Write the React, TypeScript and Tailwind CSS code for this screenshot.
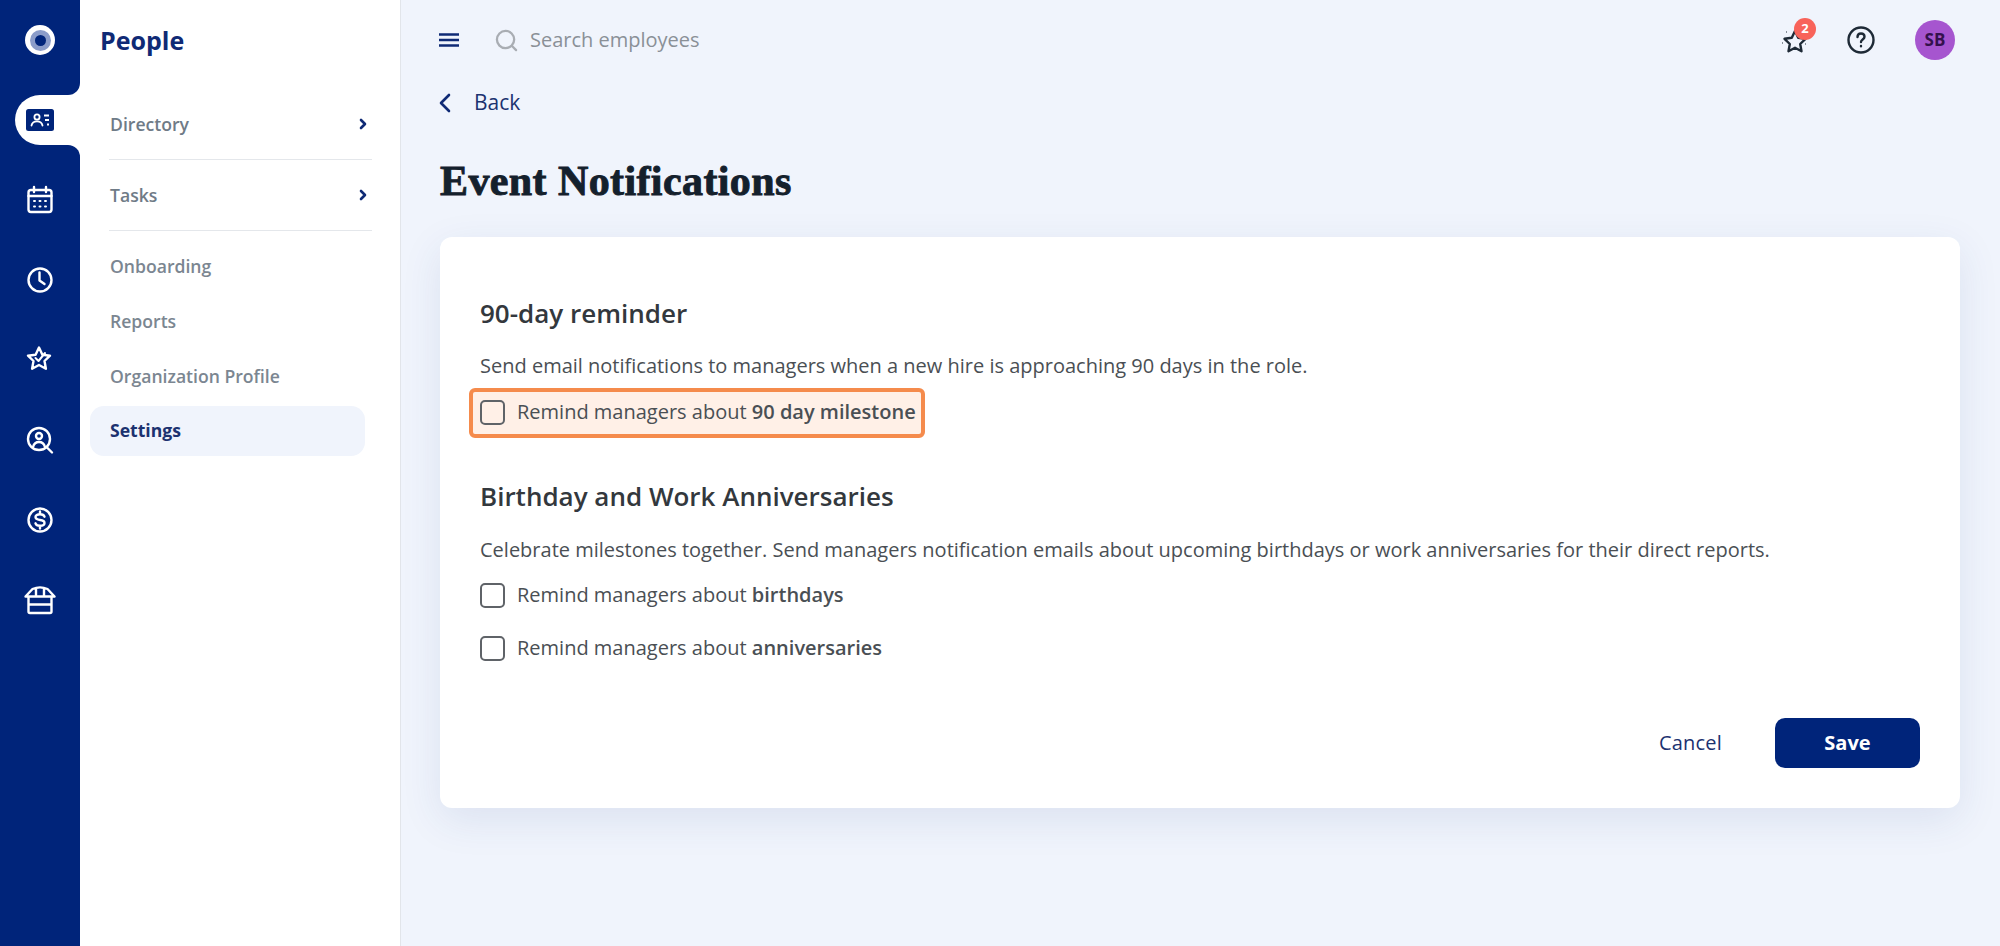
import type {ReactNode} from 'react';

const font = {fontFamily: '"Open Sans", sans-serif'};

function RailIcon({children}: {children: ReactNode}) {
	return (
			<div className="h-[80px] flex items-center justify-center">
				<svg width="32" height="32" viewBox="0 0 32 32" fill="none" stroke="white" strokeWidth="2.4" strokeLinecap="round" strokeLinejoin="round">
					{children}
				</svg>
			</div>
	);
}

function SideLink({label}: {label: string}) {
	return (
			<div className="ml-[29px] mr-[28px] h-[71px] flex items-center justify-between pl-[1px] pr-[3px] border-b border-[#e4e7eb] text-[17.6px] font-semibold text-[#6f7b87]">
				<span>{label}</span>
				<svg width="12" height="14" viewBox="0 0 12 14" fill="none" stroke="#0f2a75" strokeWidth="2.6" strokeLinecap="round" strokeLinejoin="round">
					<path d="M4 3l4 4-4 4"/>
				</svg>
			</div>
	);
}

function SideItem({label}: {label: string}) {
	return <div className="ml-[30px] h-[55px] flex items-center text-[17.6px] font-semibold text-[#7b8691]">{label}</div>;
}

function Check({children, highlight}: {children: ReactNode; highlight?: boolean}) {
	return (
			<div className="relative h-[24px] flex items-center text-[20px] text-[#4a4f54]">
				{highlight && <div className="absolute left-[-11px] top-[-12px] w-[456px] h-[50px] bg-[#fff0e7] border-[4px] border-[#f58b4c] rounded-[6px]"/>}
				<div className="relative w-[25px] h-[25px] mr-[12px] shrink-0 rounded-[5px] border-2 border-[#5f6368]"/>
				<span className="relative">{children}</span>
			</div>
	);
}

export default function App() {
	return (
			<div className="flex h-[946px] w-[2000px] overflow-hidden bg-[#f0f4fc]" style={font}>
				<div className="w-[80px] h-full shrink-0 flex flex-col bg-white">
					<div className="h-[95px] bg-[#00247a] rounded-br-[12px] flex items-start justify-center pt-[25px]">
						<div className="w-[30px] h-[30px] rounded-full bg-white flex items-center justify-center">
							<div className="w-[21px] h-[21px] rounded-full bg-[#8b9cc9] flex items-center justify-center">
								<div className="w-[11px] h-[11px] rounded-full bg-[#00247a]"/>
							</div>
						</div>
					</div>
					<div className="h-[50px] bg-[#00247a]">
						<div className="ml-[15px] h-full bg-white rounded-l-[25px] flex items-center pl-[11px]">
							<svg width="28" height="22" viewBox="0 0 28 22">
								<rect width="28" height="22" rx="2.5" fill="#00247a"/>
								<circle cx="11" cy="8" r="2.6" fill="none" stroke="white" strokeWidth="1.8"/>
								<path d="M5.5 16.5c.6-3 2.8-4.2 5.5-4.2s4.900 1.200 5.500 4.200" fill="none" stroke="white" strokeWidth="1.8" strokeLinecap="round"/>
								<path d="M18 6.500h5M19 11h4M21 15.500h2" stroke="white" strokeWidth="1.800"/>
							</svg>
						</div>
					</div>
					<div className="flex-1 bg-[#00247a] rounded-tr-[12px] pt-[15px]">
						<RailIcon>
							<rect x="4.500" y="6" width="23" height="22" rx="2.500"/>
							<path d="M4.500 12h23M10 3v5M22 3v5"/>
							<path d="M10 17h1M15.500 17h1M21 17h1M10 22.500h1M15.500 22.500h1M21 22.500h1" strokeWidth="2"/>
						</RailIcon>
						<RailIcon>
							<circle cx="16" cy="16" r="11.500"/>
							<path d="M15.500 8.500v8l5 3.500"/>
						</RailIcon>
						<RailIcon>
							<path d="M15 3.500l3.400 7.200 7.600 1-5.500 5.300 1.400 7.700-6.900-3.700-6.900 3.700 1.400-7.700L4 11.700l7.600-1z"/>
							<path d="M11.500 14l3 3 6.500-8" strokeWidth="2"/>
						</RailIcon>
						<RailIcon>
							<circle cx="15" cy="15" r="11"/>
							<circle cx="15" cy="12" r="3"/>
							<path d="M9 23c1-3.500 3-5 6-5s5 1.500 6 5M22.500 23l5.500 5.500"/>
						</RailIcon>
						<RailIcon>
							<circle cx="16" cy="16" r="11.500"/>
							<path d="M20.500 12.700c-.500-1.500-2.300-2.500-4.500-2.500-2.500 0-4.500 1.200-4.500 2.900s2 2.600 4.500 2.900 4.500 1.200 4.500 2.900-2 2.900-4.500 2.900c-2.200 0-4-1-4.500-2.500M16 7.500v2.700M16 21.800v2.700"/>
						</RailIcon>
						<RailIcon>
							<path d="M1.500 12.500L8.500 5c4.500-2 10.500-2 15 0l7 7.500zM4.500 12.500h23v15a1.500 1.500 0 0 1-1.500 1.500H6a1.500 1.500 0 0 1-1.500-1.500zM4.500 20.500h23M12 5v7.500M20 5v7.500"/>
						</RailIcon>
					</div>
				</div>

				<div className="w-[321px] h-full shrink-0 bg-white border-r border-[#e2e5ea]">
					<div className="h-[89px] pl-[20px] pt-[21px] text-[25px] leading-[38px] font-bold text-[#0f2a75]">People</div>
					<SideLink label="Directory"/>
					<SideLink label="Tasks"/>
					<div className="mt-[8px] flex flex-col">
						<SideItem label="Onboarding"/>
						<SideItem label="Reports"/>
						<SideItem label="Organization Profile"/>
						<div className="mt-[2px] ml-[10px] w-[275px] h-[50px] pl-[20px] pb-[1px] flex items-center rounded-[14px] bg-[#f0f4fc] text-[17.6px] font-bold text-[#1c3270]">Settings</div>
					</div>
				</div>

				<div className="flex-1 min-w-0 pl-[38px] pr-[40px]">
					<div className="h-[80px] flex items-center">
						<svg width="20" height="16" viewBox="0 0 20 16" stroke="#0f2a75" strokeWidth="2.400">
							<path d="M0 2.500h20M0 8h20M0 13.500h20"/>
						</svg>
						<svg className="ml-[36px]" width="23" height="23" viewBox="0 0 24 24" fill="none" stroke="#a9adb3" strokeWidth="2.400" strokeLinecap="round">
							<circle cx="11" cy="11" r="9"/>
							<path d="M18 18l4 4"/>
						</svg>
						<span className="ml-[12px] text-[20px] text-[#8a9097]">Search employees</span>
						<div className="ml-auto mr-[5px] flex items-center">
							<div className="relative w-[34px] h-[34px] mr-[31px]">
								<svg width="34" height="34" viewBox="0 0 34 34" fill="none" stroke="#1e2a36" strokeWidth="2.400" strokeLinejoin="round">
									<path d="M13 8l3.200 6.800 7.300 1-5.300 5.200 1.300 7.300-6.500-3.500-6.500 3.500 1.300-7.300-5.300-5.200 7.300-1z"/>
									<path d="M4 9h.5M.5 20h.5M23 21h.5" strokeWidth="2"/>
								</svg>
								<div className="absolute left-[12px] top-[-5px] w-[22px] h-[22px] rounded-full bg-[#f8635a] flex items-center justify-center text-[13px] font-bold text-white">2</div>
							</div>
							<svg className="mr-[40px]" width="28" height="28" viewBox="0 0 28 28" fill="none" stroke="#1e2a36" strokeWidth="2.400" strokeLinecap="round">
								<circle cx="14" cy="14" r="12.500"/>
								<path d="M10.500 11c0-2.200 1.500-3.500 3.500-3.500s3.500 1.300 3.500 3.300c0 2.700-3.500 2.700-3.500 5.200M14 20v.300"/>
							</svg>
							<div className="w-[40px] h-[40px] rounded-full bg-[#a655cf] flex items-center justify-center text-[17px] font-bold text-[#34114d]">SB</div>
						</div>
					</div>
					<div className="h-[46px] flex items-center">
						<svg width="12" height="20" viewBox="0 0 12 20" fill="none" stroke="#0f2a75" strokeWidth="2.600" strokeLinecap="round" strokeLinejoin="round">
							<path d="M10 2L2 10l8 8"/>
						</svg>
						<span className="ml-[23px] text-[21px] font-normal text-[#1c3270]">Back</span>
					</div>
					<h1 className="mt-[30px] ml-[1px] h-[50px] text-[42px] leading-[50px] font-bold tracking-[0.4px] text-[#14202c] [-webkit-text-stroke:0.9px_#14202c]" style={{fontFamily: '"Liberation Serif", serif'}}>Event Notifications</h1>
					<div className="mt-[31px] ml-[1px] h-[571px] w-[1520px] rounded-[12px] bg-white shadow-[0_12px_40px_rgba(40,70,140,0.1)] px-[40px] pt-[60px]">
						<h2 className="h-[32px] text-[26px] leading-[32px] font-semibold text-[#33383d]">90-day reminder</h2>
						<p className="mt-[24px] h-[26px] text-[20px] leading-[26px] text-[#4a4f54]">Send email notifications to managers when a new hire is approaching 90 days in the role.</p>
						<div className="mt-[21px]">
							<Check highlight>Remind managers about <span className="font-semibold">90 day milestone</span></Check>
						</div>
						<h2 className="mt-[56px] h-[32px] text-[26px] leading-[32px] font-semibold text-[#33383d]">Birthday and Work Anniversaries</h2>
						<p className="mt-[25px] h-[26px] text-[20px] leading-[26px] text-[#4a4f54]">Celebrate milestones together. Send managers notification emails about upcoming birthdays or work anniversaries for their direct reports.</p>
						<div className="mt-[20px]">
							<Check>Remind managers about <span className="font-semibold">birthdays</span></Check>
						</div>
						<div className="mt-[29px]">
							<Check>Remind managers about <span className="font-semibold">anniversaries</span></Check>
						</div>
						<div className="mt-[58px] flex items-center justify-end">
							<span className="mr-[53px] text-[20px] font-medium tracking-[0.2px] text-[#1c3270]">Cancel</span>
							<div className="w-[145px] h-[50px] rounded-[10px] bg-[#00247a] flex items-center justify-center text-[20px] font-bold text-white">Save</div>
						</div>
					</div>
				</div>
			</div>
	);
}
